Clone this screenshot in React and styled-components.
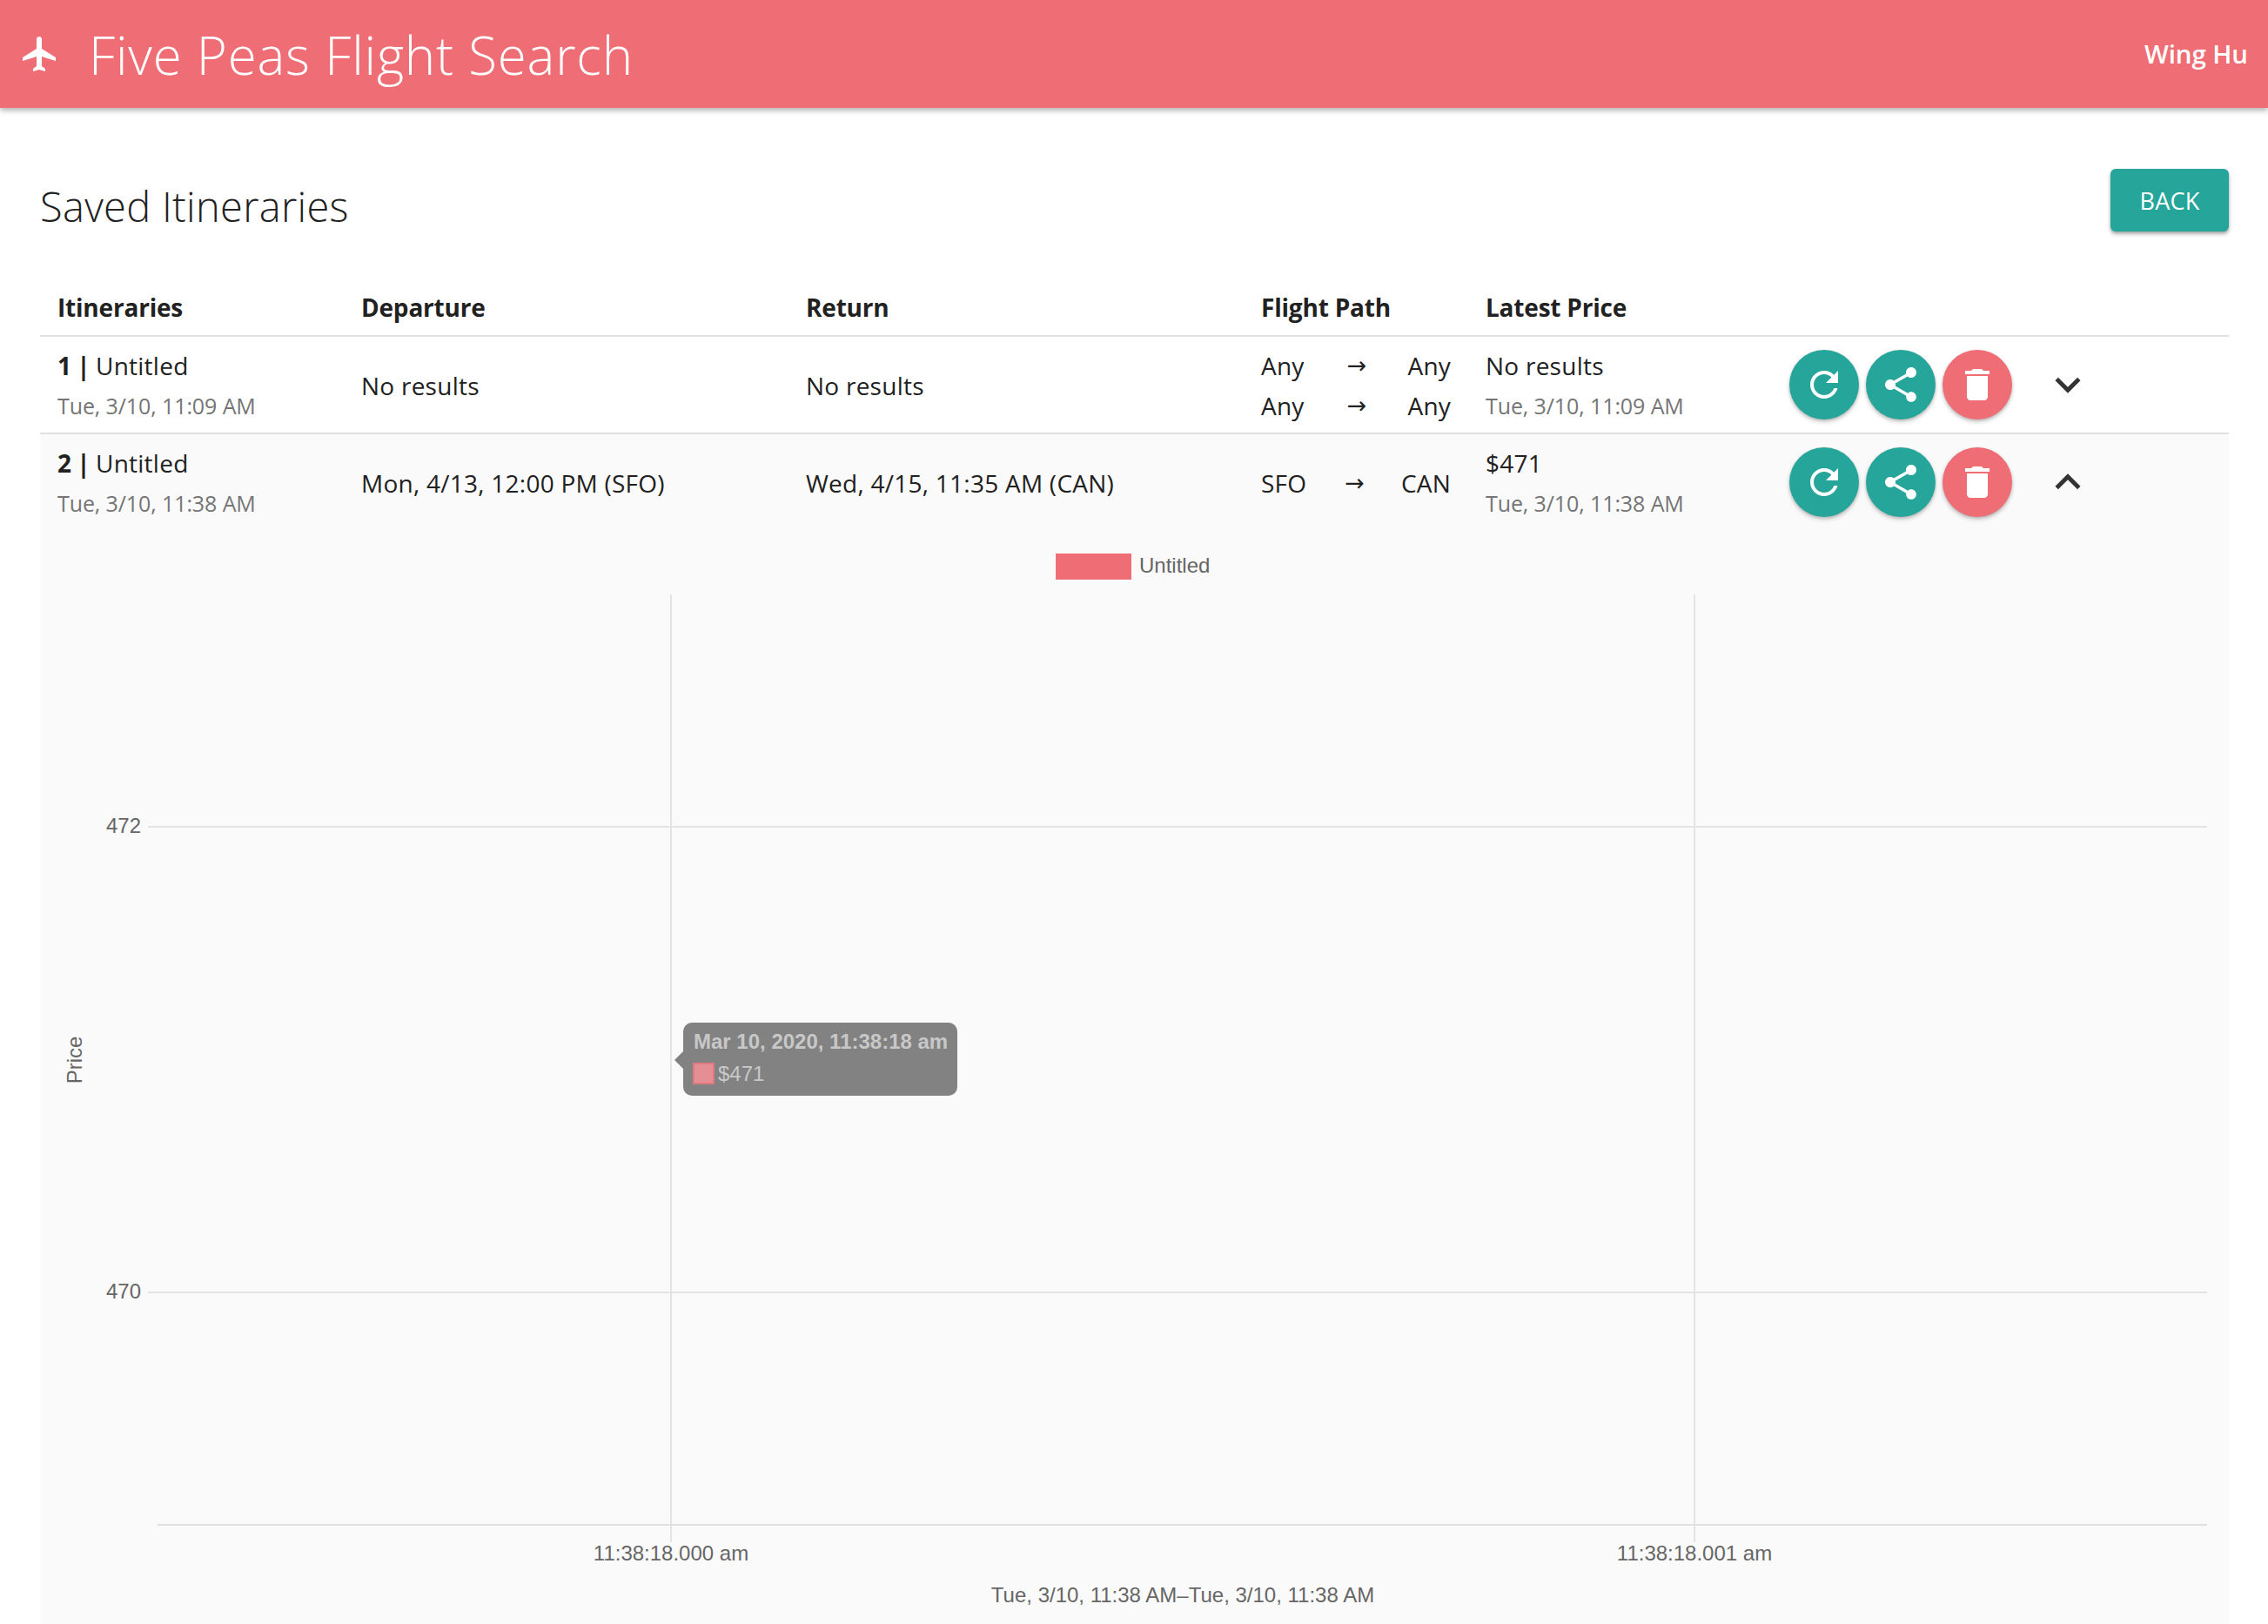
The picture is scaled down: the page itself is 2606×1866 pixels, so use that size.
import React from 'react';
import styled, { createGlobalStyle } from 'styled-components';

const Global = createGlobalStyle`
  html, body { margin: 0; padding: 0; background: #fff; }
  body { font-family: "Open Sans", "Noto Sans", sans-serif; color: #212121; overflow: hidden; }
`;

const Page = styled.div`
  width: 2606px;
  height: 1866px;
  overflow: hidden;
  display: flex;
  flex-direction: column;
`;

const AppBar = styled.header`
  height: 124px;
  flex: none;
  background: #ef6d74;
  color: #fff;
  display: flex;
  align-items: center;
  padding: 0 20px 0 22px;
  box-shadow: 0 3px 6px rgba(0, 0, 0, 0.3);
  position: relative;
`;

const PlaneIcon = styled.svg`
  width: 48px;
  height: 48px;
  fill: #fff;
  flex: none;
`;

const AppTitle = styled.h1`
  margin: 2px 0 0 32px;
  font-size: 60px;
  font-weight: 350;
  letter-spacing: 0.8px;
  flex: 1;
`;

const UserName = styled.span`
  font-size: 29.5px;
  font-weight: 600;
  letter-spacing: -0.1px;
  margin: 0 3px 2px 0;
`;

const Main = styled.main`
  flex: 1;
  padding: 0 45px 0 46px;
  display: flex;
  flex-direction: column;
  min-height: 0;
`;

const Heading = styled.div`
  height: 195px;
  flex: none;
  display: flex;
  justify-content: space-between;
  align-items: flex-start;
`;

const PageTitle = styled.h2`
  margin: 80px 0 0;
  font-size: 47px;
  line-height: 66px;
  font-weight: 350;
  letter-spacing: 0.3px;
`;

const BackButton = styled.button`
  margin-top: 70px;
  width: 136px;
  height: 72px;
  border: 0;
  border-radius: 6px;
  background: #26a69a;
  color: #fff;
  font: 400 27px "Open Sans", sans-serif;
  letter-spacing: 0.2px;
  box-shadow: 0 3px 5px rgba(0, 0, 0, 0.25), 0 2px 3px rgba(0, 0, 0, 0.15);
`;

const Cols = `
  display: grid;
  grid-template-columns: 369px 511px 523px 258px 349px 1fr;
  padding-left: 0;
`;

const HeaderRow = styled.div`
  ${Cols}
  height: 66px;
  box-sizing: content-box;
  align-items: center;
  border-bottom: 2px solid #e0e0e0;
`;

const HeaderCell = styled.div`
  font-size: 28px;
  font-weight: 700;
  letter-spacing: -0.2px;
  color: #212121;
  padding: 2px 0 0 ${p => (p.$first ? '20px' : '0')};
`;

const Row = styled.div`
  ${Cols}
  height: 110px;
  flex: none;
  align-items: center;
  background: ${p => (p.$open ? '#fafafa' : '#fff')};
  border-bottom: ${p => (p.$open ? '0' : '2px solid #e0e0e0')};
`;

const Cell = styled.div`
  font-size: 28px;
  line-height: 46px;
  letter-spacing: 0.25px;
  padding: 1px 0 0 ${p => (p.$first ? '20px' : '0')};
  white-space: nowrap;
`;

const Strong = styled.b`
  font-weight: 700;
  letter-spacing: -0.5px;
`;

const Sub = styled.div`
  font-size: 25px;
  color: #757575;
  letter-spacing: -0.1px;
`;

const PathCell = styled.div`
  width: 218px;
  font-size: 28px;
  line-height: 46px;
  letter-spacing: 0.2px;
  padding-top: 1px;
`;

const PathLine = styled.div`
  display: flex;
  justify-content: space-between;
  align-items: center;
`;

const Arrow = styled.span`
  font-size: 27px;
  font-family: "DejaVu Sans", sans-serif;
  letter-spacing: 0;
  color: #212121;
  margin-left: 2px;
`;

const Actions = styled.div`
  display: flex;
  align-items: center;
  gap: 8px;
`;

const Fab = styled.button`
  width: 80px;
  height: 80px;
  border: 0;
  padding: 0;
  border-radius: 50%;
  background: ${p => (p.$danger ? '#ef6d74' : '#26a69a')};
  display: flex;
  align-items: center;
  justify-content: center;
  box-shadow: 0 3px 5px rgba(0, 0, 0, 0.2), 0 1px 3px rgba(0, 0, 0, 0.14);
`;

const FabIcon = styled.svg`
  width: 48px;
  height: 48px;
  fill: #fff;
`;

const Chevron = styled.svg`
  width: 58px;
  height: 58px;
  fill: #333;
  margin-left: 27px;
`;

const Detail = styled.section`
  flex: 1;
  background: #fafafa;
  position: relative;
  min-height: 0;
`;

const ChartSvg = styled.svg`
  display: block;
  width: 2515px;
  height: 1257px;
`;

const Tooltip = styled.div`
  position: absolute;
  left: 739px;
  top: 566px;
  width: 315px;
  height: 84px;
  box-sizing: border-box;
  padding: 9px 12px;
  border-radius: 10px;
  background: #828282;
  font-family: "Liberation Sans", Arial, sans-serif;
  font-size: 24px;
  line-height: 26px;
  color: #c8c8c8;
  &::before {
    content: '';
    position: absolute;
    left: -10px;
    top: 33px;
    border-style: solid;
    border-width: 10px 10px 10px 0;
    border-color: transparent #828282 transparent transparent;
  }
`;

const TipTitle = styled.div`
  font-weight: 700;
  white-space: nowrap;
`;

const TipLine = styled.div`
  display: flex;
  align-items: center;
  margin-top: 11px;
  height: 25px;
`;

const Swatch = styled.span`
  width: 25px;
  height: 25px;
  box-sizing: border-box;
  background: #e58f95;
  border: 2px solid #e07a80;
  margin: 0 4px 0 -1px;
`;

const paths = {
  plane: 'M21 16v-2l-8-5V3.5c0-.83-.67-1.5-1.5-1.5S10 2.67 10 3.5V9l-8 5v2l8-2.5V19l-2 1.5V22l3.5-1 3.5 1v-1.5L13 19v-5.5l8 2.5z',
  refresh: 'M17.65 6.35C16.2 4.9 14.21 4 12 4c-4.42 0-7.99 3.58-7.99 8s3.57 8 7.99 8c3.73 0 6.84-2.55 7.73-6h-2.08c-.82 2.33-3.04 4-5.65 4-3.31 0-6-2.69-6-6s2.69-6 6-6c1.66 0 3.14.69 4.22 1.78L13 11h7V4l-2.35 2.35z',
  share: 'M18 16.08c-.76 0-1.44.3-1.96.77L8.91 12.7c.05-.23.09-.46.09-.7s-.04-.47-.09-.7l7.05-4.11c.54.5 1.25.81 2.04.81 1.66 0 3-1.34 3-3s-1.34-3-3-3-3 1.34-3 3c0 .24.04.47.09.7L8.04 9.81C7.5 9.31 6.79 9 6 9c-1.66 0-3 1.34-3 3s1.34 3 3 3c.79 0 1.5-.31 2.04-.81l7.12 4.16c-.05.21-.08.43-.08.65 0 1.61 1.31 2.92 2.92 2.92 1.61 0 2.92-1.31 2.92-2.92s-1.31-2.92-2.92-2.92z',
  del: 'M6 19c0 1.1.9 2 2 2h8c1.1 0 2-.9 2-2V7H6v12zM19 4h-3.5l-1-1h-5l-1 1H5v2h14V4z',
  more: 'M16.59 8.59L12 13.17 7.41 8.59 6 10l6 6 6-6z',
  less: 'M12 8l-6 6 1.41 1.41L12 10.83l4.59 4.58L18 14z',
};

const RowActions = ({ open }) => (
  <Actions>
    <Fab><FabIcon viewBox="0 0 24 24"><path d={paths.refresh} /></FabIcon></Fab>
    <Fab><FabIcon viewBox="0 0 24 24"><path d={paths.share} /></FabIcon></Fab>
    <Fab $danger><FabIcon viewBox="0 0 24 24"><path d={paths.del} /></FabIcon></Fab>
    <Chevron viewBox="0 0 24 24"><path d={open ? paths.less : paths.more} /></Chevron>
  </Actions>
);

const Path = ({ from, to }) => (
  <PathLine><span>{from}</span><Arrow>→</Arrow><span>{to}</span></PathLine>
);

const tick = { fontFamily: '"Liberation Sans", Arial, sans-serif', fontSize: 24, fill: '#666' };
const grid = '#e4e4e4';

const Chart = () => (
  <ChartSvg viewBox="46 609 2515 1257">
    <rect x="1213" y="636" width="87" height="30" fill="#ef6d74" />
    <text x="1309" y="658" style={tick}>Untitled</text>
    <line x1="771" y1="683" x2="771" y2="1772" stroke={grid} strokeWidth="2" />
    <line x1="1947" y1="683" x2="1947" y2="1772" stroke={grid} strokeWidth="2" />
    <line x1="170" y1="950" x2="2536" y2="950" stroke={grid} strokeWidth="2" />
    <line x1="170" y1="1485" x2="2536" y2="1485" stroke={grid} strokeWidth="2" />
    <line x1="181" y1="1752" x2="2536" y2="1752" stroke="#e0e0e0" strokeWidth="2" />
    <text x="162" y="957" textAnchor="end" style={tick}>472</text>
    <text x="162" y="1492" textAnchor="end" style={tick}>470</text>
    <text x="771" y="1793" textAnchor="middle" style={tick}>11:38:18.000 am</text>
    <text x="1947" y="1793" textAnchor="middle" style={tick}>11:38:18.001 am</text>
    <text x="1359" y="1841" textAnchor="middle" style={tick}>Tue, 3/10, 11:38 AM–Tue, 3/10, 11:38 AM</text>
    <text transform="translate(94 1218) rotate(-90)" textAnchor="middle" style={tick}>Price</text>
  </ChartSvg>
);

export default function App() {
  return (
    <Page>
      <Global />
      <AppBar>
        <PlaneIcon viewBox="0 0 24 24"><path d={paths.plane} /></PlaneIcon>
        <AppTitle>Five Peas Flight Search</AppTitle>
        <UserName>Wing Hu</UserName>
      </AppBar>
      <Main>
        <Heading>
          <PageTitle>Saved Itineraries</PageTitle>
          <BackButton>BACK</BackButton>
        </Heading>
        <HeaderRow>
          <HeaderCell $first>Itineraries</HeaderCell>
          <HeaderCell>Departure</HeaderCell>
          <HeaderCell>Return</HeaderCell>
          <HeaderCell>Flight Path</HeaderCell>
          <HeaderCell>Latest Price</HeaderCell>
          <div />
        </HeaderRow>
        <Row>
          <Cell $first><div><Strong>1 | </Strong>Untitled</div><Sub>Tue, 3/10, 11:09 AM</Sub></Cell>
          <Cell>No results</Cell>
          <Cell>No results</Cell>
          <PathCell><Path from="Any" to="Any" /><Path from="Any" to="Any" /></PathCell>
          <Cell><div>No results</div><Sub>Tue, 3/10, 11:09 AM</Sub></Cell>
          <RowActions />
        </Row>
        <Row $open>
          <Cell $first><div><Strong>2 | </Strong>Untitled</div><Sub>Tue, 3/10, 11:38 AM</Sub></Cell>
          <Cell>Mon, 4/13, 12:00 PM (SFO)</Cell>
          <Cell>Wed, 4/15, 11:35 AM (CAN)</Cell>
          <PathCell><Path from="SFO" to="CAN" /></PathCell>
          <Cell><div>$471</div><Sub>Tue, 3/10, 11:38 AM</Sub></Cell>
          <RowActions open />
        </Row>
        <Detail>
          <Chart />
          <Tooltip>
            <TipTitle>Mar 10, 2020, 11:38:18 am</TipTitle>
            <TipLine><Swatch />$471</TipLine>
          </Tooltip>
        </Detail>
      </Main>
    </Page>
  );
}
